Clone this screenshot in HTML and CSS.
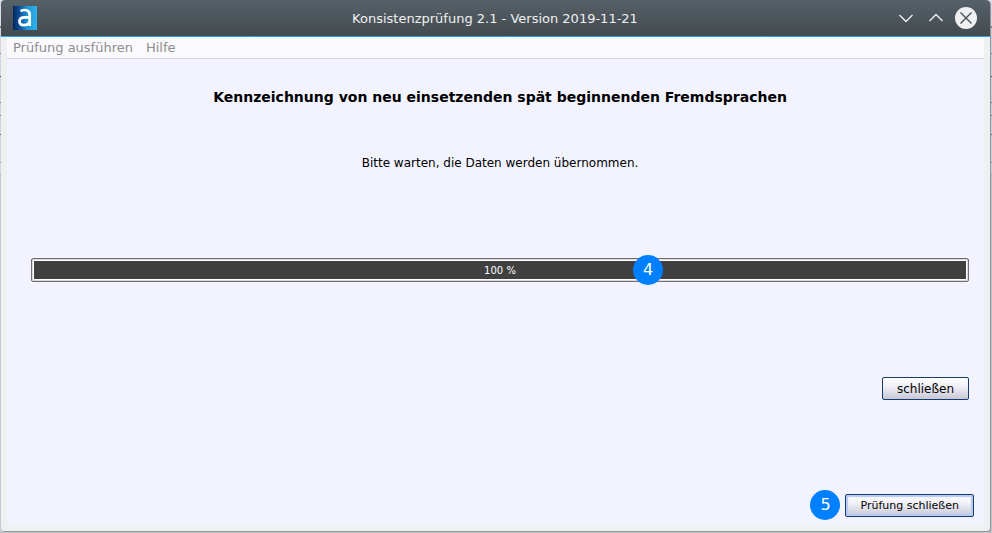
FILE: index.html
```html
<!DOCTYPE html>
<html lang="de">
<head>
  <meta charset="UTF-8" />
  <meta name="viewport" content="width=device-width, initial-scale=1.0" />
  <title>Konsistenzprüfung 2.1</title>
  <link rel="stylesheet" href="styles.css">
</head>
<body>
  <div class="window">
    <header class="titlebar">
      <svg class="app-icon" viewBox="0 0 24 24" aria-hidden="true">
        <defs>
          <linearGradient id="iconBlue">
            <stop offset="0" stop-color="#04295c" />
            <stop offset="0.25" stop-color="#0b4a94" />
            <stop offset="0.6" stop-color="#2196d6" />
            <stop offset="1" stop-color="#2cb4ea" />
          </linearGradient>
        </defs>
        <rect width="24" height="24" fill="url(#iconBlue)" />
        <path d="M7.5 5.2C11 3.2 16.7 3.4 16.7 8.6V20M16.7 11.3H11.8C4.7 11.3 5 19.2 10.6 19.2C14 19.2 16.7 17.3 16.7 14" fill="none" stroke="#fff" stroke-width="2.7" />
      </svg>
      <div class="title">Konsistenzprüfung 2.1 - Version 2019-11-21</div>
      <div class="window-controls">
        <button class="control" aria-label="Minimieren">
          <svg viewBox="0 0 22 22"><path d="M4.500 8L11 14.500L17.500 8" /></svg>
        </button>
        <button class="control" aria-label="Maximieren">
          <svg viewBox="0 0 22 22"><path d="M4.500 14L11 7.500L17.500 14" /></svg>
        </button>
        <button class="control control-close" aria-label="Fenster schließen">
          <svg viewBox="0 0 22 22"><circle cx="11" cy="11" r="11" /><path d="M5.500 5.500L16.500 16.500M16.500 5.500L5.500 16.500" /></svg>
        </button>
      </div>
    </header>

    <div class="frame">
      <nav class="menubar">
        <button class="menu-item">Prüfung ausführen</button>
        <button class="menu-item">Hilfe</button>
      </nav>

      <main class="content">
        <h1>Kennzeichnung von neu einsetzenden spät beginnenden Fremdsprachen</h1>
        <label class="message" for="progress">Bitte warten, die Daten werden übernommen.</label>

        <div class="progress-box">
          <progress id="progress" value="100" max="100"></progress>
          <span class="progress-text">100 %</span>
          <span class="marker marker-progress">4</span>
        </div>

        <div class="actions">
          <button class="button">schließen</button>
        </div>
      </main>

      <footer class="footer">
        <span class="marker">5</span>
        <button class="button button-default">Prüfung schließen</button>
      </footer>
    </div>
  </div>
</body>
</html>
```
FILE: styles.css
```css
* {
  box-sizing: border-box;
}

body {
  margin: 0;
  padding: 0 2px 2px 1px;
  min-height: 100vh;
  display: flex;
  font-family: "DejaVu Sans", sans-serif;
  font-size: 12px;
  color: #000;
  background: linear-gradient(
    #dcdce8 26px, #77777f 26px, #77777f 28px, #d4d4e0 28px,
    #d4d4e0 53px, #85858f 53px, #85858f 54px, #d4d4e0 54px,
    #d4d4e0 76px, #44444c 76px, #44444c 77px, #d4d4e0 77px,
    #d4d4e0 102px, #6080b0 102px, #6080b0 103px, #d4d4e0 103px,
    #d4d4e0 115px, #77777f 115px, #77777f 116px, #d4d4e0 116px,
    #d4d4e0 134px, #4870a8 134px, #4870a8 135px, #d4d4e0 135px,
    #d4d4e0 162px, #9898a4 162px, #9898a4 163px, #d4d4e0 163px,
    #d4d4e0 174px, #a8a8b4 174px, #a8a8b4 175px, #c8c8d0 175px);
}

button {
  font-family: inherit;
  color: inherit;
  margin: 0;
}

.window {
  flex: 1;
  display: flex;
  flex-direction: column;
  background: #eff0f1;
  border-radius: 4px 4px 3px 3px;
  box-shadow: 1px 1px 1px #909096;
}

/* Titelleiste */
.titlebar {
  height: 37px;
  display: grid;
  grid-template-columns: 90px 1fr 90px;
  align-items: center;
  padding: 0 13px 0 12px;
  background: linear-gradient(#566067, #434b50);
  border-bottom: 1px solid #2aa5e4;
  border-radius: 4px 4px 0 0;
}

.app-icon {
  width: 24px;
  height: 24px;
}

.title {
  text-align: center;
  font-size: 13px;
  color: #eff0f1;
}

.window-controls {
  display: flex;
  justify-content: flex-end;
  gap: 8px;
}

.control {
  width: 22px;
  height: 22px;
  padding: 0;
  border: 0;
  background: none;
}

.control svg {
  display: block;
  width: 22px;
  height: 22px;
  fill: none;
  stroke: #eff0f1;
  stroke-width: 1.4;
}

.control-close circle {
  fill: #eff0f1;
  stroke: none;
}

.control-close path {
  stroke: #475057;
}

/* Fensterinhalt */
.frame {
  flex: 1;
  display: flex;
  flex-direction: column;
  margin: 0 6px 6px;
  background: #f3f3ff;
}

.menubar {
  display: flex;
  gap: 13px;
  height: 22px;
  padding: 0 6px;
  background: #f9f9fe;
  border-bottom: 1px solid #d4d4e4;
}

.menu-item {
  padding: 0;
  border: 0;
  background: none;
  font-size: 13px;
  color: #8e8e8e;
}

.content {
  display: flex;
  flex-direction: column;
  padding: 28px 15px 0 24px;
}

h1 {
  margin: 0;
  font-size: 14px;
  line-height: 20px;
  text-align: center;
}

.message {
  margin-top: 46px;
  line-height: 20px;
  text-align: center;
}

.progress-box {
  position: relative;
  display: grid;
  align-items: center;
  margin-top: 85px;
}

progress,
.progress-text {
  grid-area: 1 / 1;
}

progress {
  appearance: none;
  width: 100%;
  height: 24px;
  padding: 1px;
  border: 1px solid #6e6e72;
  border-radius: 2px;
  background: #d8d8dc;
}

progress::-webkit-progress-bar {
  padding: 1px;
  background: #fff;
}

progress::-webkit-progress-value {
  background: #404040;
}

.progress-text {
  position: relative;
  text-align: center;
  font-size: 10px;
  color: #fff;
}

.marker {
  width: 30px;
  height: 30px;
  border-radius: 50%;
  background: #0080ff;
  color: #fff;
  font-size: 16px;
  line-height: 30px;
  text-align: center;
}

.marker-progress {
  position: absolute;
  top: -3px;
  left: calc(66% - 17px);
}

.actions {
  display: flex;
  justify-content: flex-end;
  margin-top: 95px;
}

.button {
  height: 23px;
  padding: 0 14px;
  border: 1px solid #163c70;
  border-radius: 2px;
  background: linear-gradient(#fff, #f0f0f8 40%, #c8c8d6);
  font-size: 12px;
}

.button-default {
  font-size: 11px;
  box-shadow: inset 0 0 1px 2px #b4c8f4;
}

/* Fußzeile */
.footer {
  display: flex;
  justify-content: flex-end;
  align-items: center;
  gap: 5px;
  margin-top: auto;
  padding: 0 10px 5px;
}
```
